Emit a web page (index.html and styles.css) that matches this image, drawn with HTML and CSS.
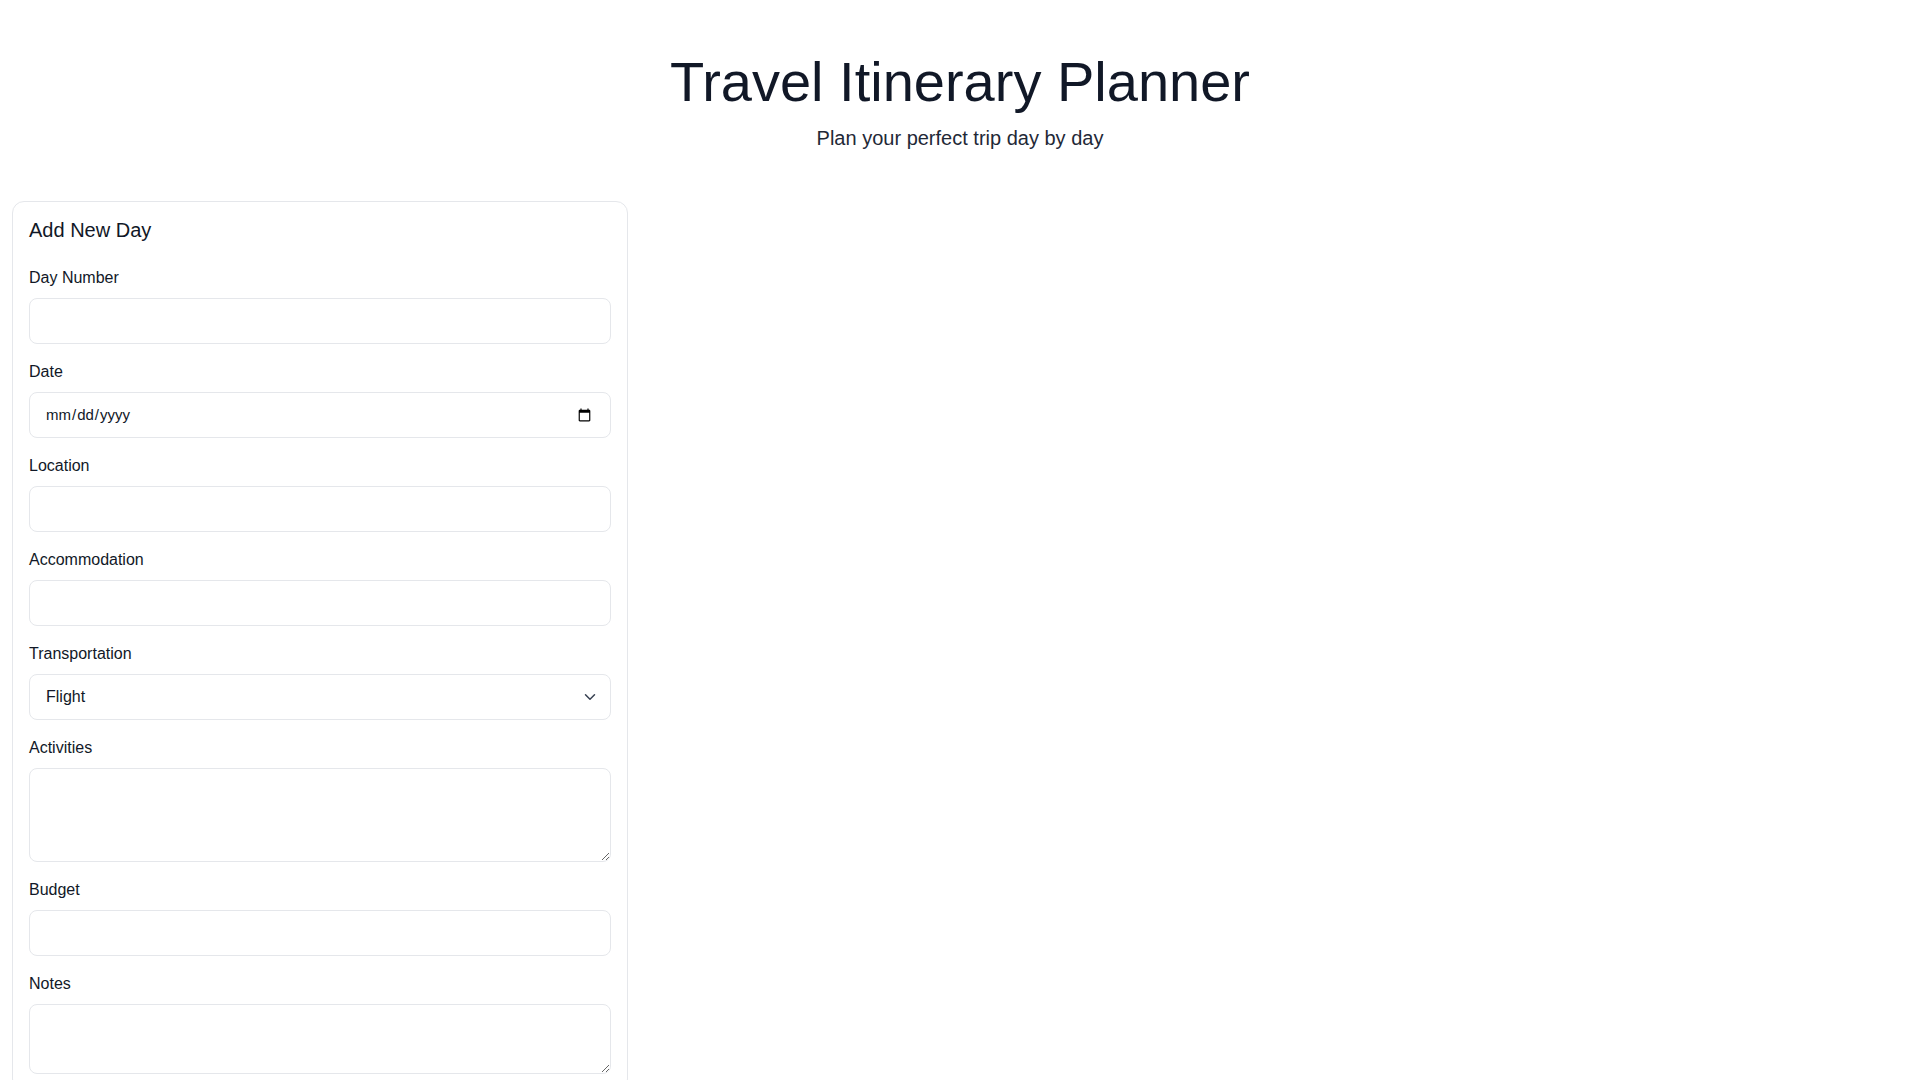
FILE: index.html
```html
<!DOCTYPE html>
<html lang="en">
<head>
<meta charset="utf-8">
<title>Travel Itinerary Planner</title>
<link rel="stylesheet" href="styles.css">
</head>
<body>
<div class="page">
  <header class="header">
    <h1 class="title">Travel Itinerary Planner</h1>
    <p class="subtitle">Plan your perfect trip day by day</p>
  </header>
  <main class="grid">
    <section class="card">
      <h2 class="card-title">Add New Day</h2>
      <form class="form">
        <div class="field">
          <label class="label" for="day">Day Number</label>
          <input class="control" id="day" type="number">
        </div>
        <div class="field">
          <label class="label" for="date">Date</label>
          <input class="control date" id="date" type="date">
        </div>
        <div class="field">
          <label class="label" for="loc">Location</label>
          <input class="control" id="loc" type="text">
        </div>
        <div class="field">
          <label class="label" for="acc">Accommodation</label>
          <input class="control" id="acc" type="text">
        </div>
        <div class="field">
          <label class="label" for="tr">Transportation</label>
          <div class="select-wrap">
            <select class="control select" id="tr">
              <option>Flight</option>
              <option>Train</option>
              <option>Bus</option>
              <option>Car</option>
            </select>
            <svg class="chevron" width="12" height="8" viewBox="0 0 12 8" aria-hidden="true"><path d="M1.5 1.75 6 6.25l4.5-4.5" fill="none" stroke="#374151" stroke-width="1.5" stroke-linecap="round" stroke-linejoin="round"/></svg>
          </div>
        </div>
        <div class="field">
          <label class="label" for="act">Activities</label>
          <textarea class="control area" id="act" rows="3"></textarea>
        </div>
        <div class="field">
          <label class="label" for="bud">Budget</label>
          <input class="control" id="bud" type="number">
        </div>
        <div class="field">
          <label class="label" for="notes">Notes</label>
          <textarea class="control area" id="notes" rows="2"></textarea>
        </div>
      </form>
    </section>
    <section class="list"></section>
  </main>
</div>
</body>
</html>
```

FILE: styles.css
```css
* { box-sizing: border-box; }
html, body { margin: 0; padding: 0; background: #ffffff; }
body {
  font-family: "Liberation Sans", Arial, Helvetica, sans-serif;
  color: #111827;
}
.page { padding: 0 12px; }
.header { text-align: center; padding-top: 54px; }
.title {
  margin: 0;
  font-size: 56px;
  line-height: 56px;
  font-weight: 400;
  color: #111827;
}
.subtitle {
  margin: 14px 0 0;
  font-size: 20px;
  line-height: 28px;
  color: #1f2937;
}
.grid {
  margin-top: 49px;
  display: grid;
  grid-template-columns: repeat(3, 1fr);
  gap: 24px;
  align-items: start;
}
.card {
  border: 1px solid #e5e7eb;
  border-radius: 12px;
  background: #fff;
  padding: 16px;
}
.card-title {
  margin: 0 0 24px;
  font-size: 20px;
  line-height: 24px;
  font-weight: 400;
  color: #111827;
}
.form { display: flex; flex-direction: column; gap: 16px; }
.field { display: flex; flex-direction: column; }
.label {
  font-size: 16px;
  line-height: 24px;
  color: #111827;
  margin-bottom: 8px;
}
.control {
  display: block;
  width: 100%;
  font-family: "Liberation Sans", Arial, Helvetica, sans-serif;
  font-size: 16px;
  line-height: 24px;
  color: #111827;
  padding: 10px 16px;
  border: 1px solid #e5e7eb;
  border-radius: 8px;
  background: #fff;
  outline: none;
  margin: 0;
}
input.control { height: 46px; }
.date { font-size: 15px; padding-left: 15px; }
.select-wrap { position: relative; }
.select {
  appearance: none;
  -webkit-appearance: none;
  height: 46px;
  padding-right: 40px;
}
.chevron {
  position: absolute;
  right: 15px;
  top: 19px;
  pointer-events: none;
}
.area { resize: vertical; }
.list { grid-column: span 2; }
```
